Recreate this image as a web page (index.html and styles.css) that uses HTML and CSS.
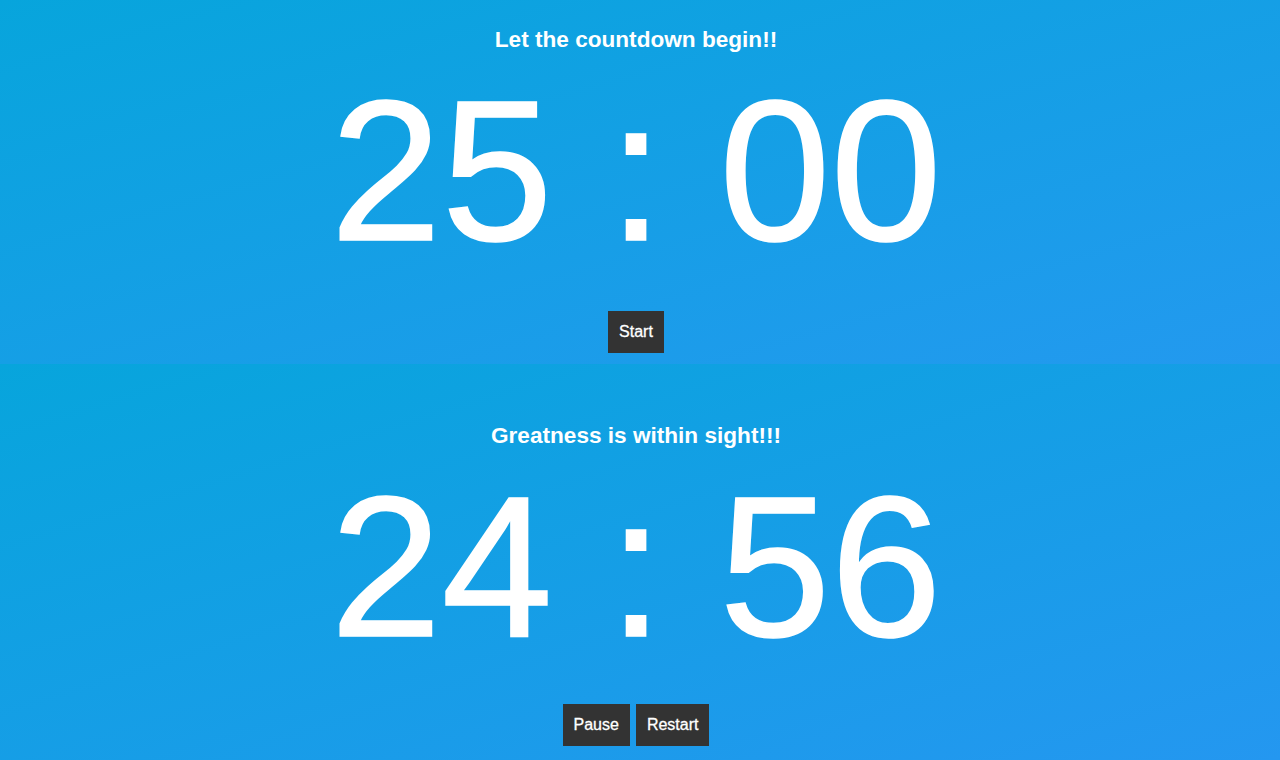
FILE: index.html
```html
<!DOCTYPE html>
<html>
<head>
<meta charset="utf-8">
<link rel="stylesheet" href="styles.css">
</head>
<body>
<section class="timer timer-first">
  <h2 class="title">Let the countdown begin!!</h2>
  <div class="clock">25 : 00</div>
  <div class="controls">
    <button class="btn">Start</button>
  </div>
</section>
<section class="timer timer-second">
  <h2 class="title">Greatness is within sight!!!</h2>
  <div class="clock">24 : 56</div>
  <div class="controls">
    <button class="btn">Pause</button>
    <button class="btn">Restart</button>
  </div>
</section>
</body>
</html>
```
FILE: styles.css
```css
html, body {
  margin: 0;
  padding: 0;
}
body {
  font-family: "Liberation Sans", Arial, Helvetica, sans-serif;
  color: #fff;
  overflow: hidden;
  height: 760px;
}
.timer {
  display: flex;
  flex-direction: column;
  align-items: center;
  padding-right: 8px;
  background: linear-gradient(to bottom right, #07a5dc, #2399ef);
  box-sizing: border-box;
}
.timer-first {
  height: 364px;
  padding-top: 27px;
}
.timer-second {
  height: 396px;
  padding-top: 59px;
  background: linear-gradient(to bottom right, #07a5dc, #2497f0);
}
.title {
  margin: 0;
  font-size: 22.6px;
  line-height: 26px;
  font-weight: bold;
}
.clock {
  margin-top: 18px;
  font-size: 200px;
  line-height: 200px;
  white-space: pre;
  -webkit-text-stroke: 1.5px #fff;
}
.controls {
  display: flex;
  gap: 6px;
  margin-top: 40px;
}
.timer-second .controls {
  margin-top: 37px;
}
.btn {
  font-family: "Liberation Sans", Arial, Helvetica, sans-serif;
  font-size: 16px;
  line-height: 20px;
  padding: 11px 11px;
  border: none;
  border-radius: 0;
  background: #333;
  color: #fff;
  cursor: pointer;
  -webkit-text-stroke: 0.3px #fff;
}
```
